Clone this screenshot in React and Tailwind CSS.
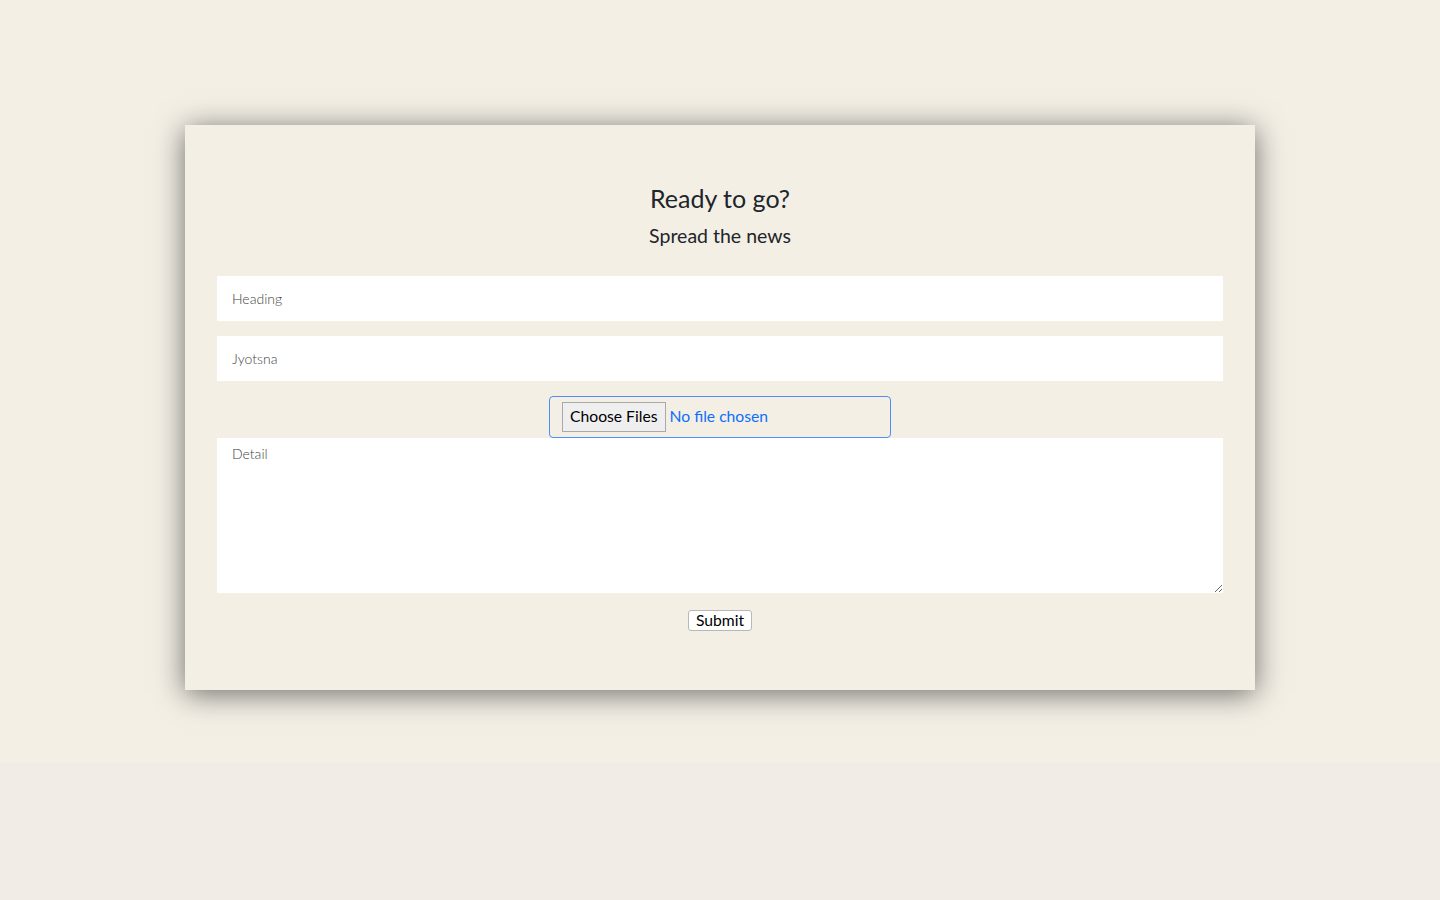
import React from 'react';

const App = () => {
  return (
    <div className="min-h-[900px] w-full bg-[#f1ede6] font-['Lato','Open_Sans',sans-serif]">
      {/* page section */}
      <section className="bg-[#f3efe5] pt-[125px] pb-[73px] flex justify-center">
        <div className="w-[1070px] h-[565px] bg-[#f3efe5] shadow-[0_4px_28px_rgba(0,0,0,0.55)] px-[32px] pt-[58px]">
          <h2 className="text-center text-[25px] leading-[30px] text-[#212529]">Ready to go?</h2>
          <p className="text-center text-[19.5px] leading-[26px] text-[#212529] mt-[10px]">Spread the news</p>

          <form className="mt-[27px] flex flex-col items-center" onSubmit={(e) => e.preventDefault()}>
            <input
              type="text"
              placeholder="Heading"
              className="w-full h-[45px] bg-white px-[15px] text-[14px] font-light text-[#495057] placeholder:text-[#444] outline-none"
            />
            <input
              type="text"
              placeholder="Jyotsna"
              className="mt-[15px] w-full h-[45px] bg-white px-[15px] text-[14px] font-light text-[#495057] placeholder:text-[#444] outline-none"
            />

            {/* file picker */}
            <div className="mt-[15px] w-[342px] h-[42px] border border-[#4d8ff7] rounded-[4px] flex items-center pl-[12px]">
              <span className="h-[30px] px-[7px] flex items-center border border-[#a9a9a9] bg-[#efefef] text-[15.7px] text-black">
                Choose Files
              </span>
              <span className="ml-[4px] text-[15.7px] text-[#0d6efd]">No file chosen</span>
            </div>

            <textarea
              placeholder="Detail"
              className="w-full h-[155px] bg-white px-[15px] pt-[5px] text-[14px] font-light text-[#495057] placeholder:text-[#444] outline-none resize-y"
            />

            <button
              type="submit"
              className="mt-[17px] h-[21px] px-[7px] bg-white border border-[#b8b8b8] rounded-[3px] text-[15.7px] leading-[19px] text-black"
            >
              Submit
            </button>
          </form>
        </div>
      </section>
    </div>
  );
};

export default App;
